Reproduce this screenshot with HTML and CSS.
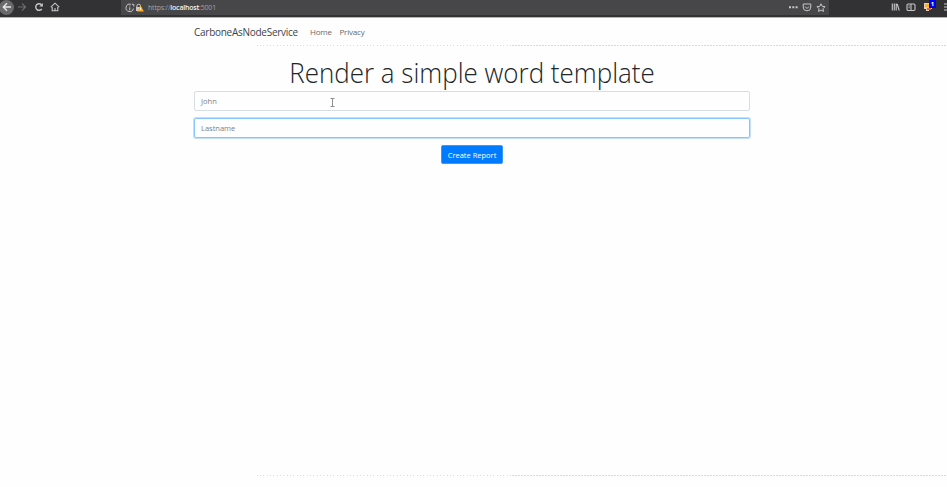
FILE: index.html
```
<!DOCTYPE html>
<html lang="en">
<head>
<meta charset="utf-8">
<title>Home Page - CarboneAsNodeService</title>
<link rel="stylesheet" href="styles.css">
</head>
<body>
<div class="browser">
  <div class="nav-buttons">
    <span class="back"><svg width="10" height="10" viewBox="0 0 10 10"><path d="M9 5H1.500M5 1.300 1.300 5 5 8.700"/></svg></span>
    <svg class="dim" width="10" height="10" viewBox="0 0 10 10"><path d="M1 5h7.500M5 1.500 8.600 5 5 8.500"/></svg>
    <svg class="reload" width="10" height="10" viewBox="0 0 10 10"><path d="M7.800 6.800A3.300 3.300 0 1 1 7.500 2.800"/><path class="fill" d="M8.900 1v3.600H5.300z"/></svg>
    <svg class="home" width="10" height="10" viewBox="0 0 10 10"><path d="M.8 5.200 5 1.200l4.200 4M2.200 5v3.800h5.600V5M5 9V6"/></svg>
  </div>
  <div class="address">
    <svg class="info" width="10" height="10" viewBox="0 0 10 10"><path d="M5.800 1.300A3.700 3.700 0 1 0 8.400 5.500M4.800 4.300v3M4.800 2.500v.8M6.800 1.300h2v2.200"/></svg>
    <svg class="lock" width="9" height="10" viewBox="0 0 9 10"><path d="M1.900 5V3a1.800 1.800 0 0 1 3.600 0v2"/><path class="fill" d="M1 4h5.500v4H1z"/><path class="warn" d="M5.500 2.600 8.900 8.600H2.100z"/><path class="mark" d="M5.500 4.700v2"/></svg>
    <span class="url">https://<b>localhost</b>:5001</span>
    <span class="page-actions">
      <svg width="9" height="10" viewBox="0 0 9 10"><path class="fill" d="M0 3.200h2v2H0zM3.300 3.200h2v2h-2zM6.600 3.200h2v2h-2z"/></svg>
      <svg width="10" height="10" viewBox="0 0 10 10"><path d="M1.200 1h7.600v3a3.800 3.800 0 0 1-7.600 0zM3 3.500l2 2 2-2"/></svg>
      <svg width="10" height="10" viewBox="0 0 10 10"><path d="m5 .8 1.200 2.500 2.800.4-2 2 .5 2.700L5 7.100 2.500 8.400 3 5.700l-2-2 2.800-.4z"/></svg>
    </span>
  </div>
  <div class="tools">
    <svg width="9" height="10" viewBox="0 0 9 10"><path d="M1.300 1.500v7M3.300 1.500v7M5.200 1.500v7M6.200 2l2 6.500"/></svg>
    <svg width="10" height="10" viewBox="0 0 10 10"><rect x="1" y="2" width="8" height="6.500" rx="1.200"/><path d="M5 2v6.500M2.500 4h1.200M2.500 5.800h1.200"/></svg>
    <span class="extension"><svg width="10" height="10" viewBox="0 0 10 10"><path class="pale" d="M1 1h8v6H6v2H3V7H1z"/><path class="warn" d="M2 2h4v3H2z"/><path class="red" d="M4 6h4v2H4z"/></svg><span class="badge">1</span></span>
    <svg class="menu" width="4" height="10" viewBox="0 0 4 10"><path d="M1 2h3M1 5h3M1 8h3"/></svg>
  </div>
</div>
<header class="rule">
  <nav class="container">
    <a class="brand">CarboneAsNodeService</a>
    <a class="link home-link">Home</a>
    <a class="link">Privacy</a>
  </nav>
  <svg class="dots" width="690" height="1"><path class="sparse" d="M0 .5h255"/><path class="dense" d="M255 .5h435"/></svg>
</header>
<main class="container">
  <h1>Render a simple word template</h1>
  <form>
    <div class="field">John
      <svg class="cursor" width="5" height="9" viewBox="0 0 5 9"><path d="M.5 .5h4M2.500 .5v8M.5 8.500h4"/></svg>
    </div>
    <div class="field focus">Lastname</div>
    <button type="button">Create Report</button>
  </form>
</main>
<footer><svg class="dots" width="690" height="1"><path class="sparse" d="M0 .5h255"/><path class="dense" d="M255 .5h435"/></svg></footer>
</body>
</html>
```
FILE: styles.css
```
* { box-sizing: border-box; }
body {
  margin: 0;
  height: 487px;
  overflow: hidden;
  display: flex;
  flex-direction: column;
  background: #fefefe;
  color: #212529;
  font-family: "Open Sans", "Noto Sans", sans-serif;
}
svg { display: block; flex: none; }
.browser {
  height: 18px;
  flex: none;
  display: flex;
  background: #323234;
  border-bottom: 1px solid #b5b5b5;
}
.browser svg { fill: none; stroke: #c8c8ca; stroke-width: 1.1; }
.browser svg .fill { fill: #c8c8ca; stroke: none; }
.browser svg .warn { fill: #ffb028; stroke: none; }
.browser svg .mark { stroke: #fff; stroke-width: .8; }
.browser svg .pale { fill: #e9cdbb; stroke: none; }
.browser svg .red { fill: #dc6840; stroke: none; }
.browser .dim { stroke: #6c6c6f; }
.nav-buttons { width: 121px; height: 14px; display: flex; align-items: center; }
.back {
  width: 15px;
  height: 15px;
  margin-left: -1px;
  margin-right: 3px;
  border-radius: 50%;
  background: #6a6a6c;
  display: flex;
  align-items: center;
  justify-content: center;
}
.browser .back svg { stroke: #e6e6e6; stroke-width: 1.4; }
.browser .reload { margin-left: 7px; stroke-width: 1.4; }
.home { margin-left: 6px; }
.address {
  width: 708px;
  height: 15px;
  padding-left: 4px;
  display: flex;
  align-items: center;
  background: #474749;
}
.browser .address svg { stroke-width: 1; }
.url { margin-left: 4px; font-size: 7px; line-height: 14px; letter-spacing: -.2px; color: #a0a0a2; }
.url b { font-weight: 600; color: #f2f2f3; }
.page-actions { margin-left: auto; padding-right: 3px; display: flex; gap: 4px; }
.tools { flex: 1; height: 14px; padding-left: 62px; display: flex; align-items: center; gap: 6px; }
.extension { position: relative; margin-left: 1px; }
.badge {
  position: absolute;
  left: 6px;
  top: -2px;
  width: 7px;
  height: 8px;
  background: #0000ee;
  color: #fff;
  font-size: 6px;
  font-weight: 700;
  line-height: 8px;
  text-align: center;
}
.menu { margin-left: auto; }
.container { width: 556px; margin-left: 194px; }
.rule { height: 28px; flex: none; }
nav { height: 27px; display: flex; align-items: center; padding-top: 2px; }
.brand { width: 116px; font-size: 10px; line-height: 15px; letter-spacing: -.27px; color: #3f4347; white-space: nowrap; }
.link { font-size: 8px; line-height: 12px; padding-bottom: 1px; letter-spacing: -.2px; color: #66696c; }
.home-link { width: 29.500px; }
.dots { margin-left: 257px; fill: none; stroke: #d9dadb; stroke-width: 1; }
.sparse { stroke-dasharray: 1 2 1 2 1 3; }
.dense { stroke-dasharray: 2 1; }
h1 {
  margin: 5px 0 0;
  height: 40px;
  font-size: 28px;
  font-weight: 300;
  line-height: 42px;
  text-align: center;
  white-space: nowrap;
  transform: scaleX(.927);
}
form { display: flex; flex-direction: column; align-items: center; }
.field {
  position: relative;
  width: 556px;
  height: 20px;
  margin-bottom: 7px;
  padding-left: 6px;
  border: 1px solid #d8dfe3;
  border-radius: 2px;
  font-size: 7.500px;
  line-height: 19px;
  color: #7b8085;
}
.focus { border-color: #86c6fb; box-shadow: 0 0 0 1px #c2dffb; }
.cursor { position: absolute; left: 135px; top: 6px; fill: none; stroke: #8f8f8f; stroke-width: 1; }
button {
  width: 62px;
  height: 19px;
  padding: 2px 0 0;
  border: 1px solid #3a98fb;
  border-radius: 2px;
  background: #007bff;
  color: #fff;
  font: 7.500px/15px "Open Sans", sans-serif;
  white-space: nowrap;
}
footer { margin-top: auto; height: 12px; }
```
